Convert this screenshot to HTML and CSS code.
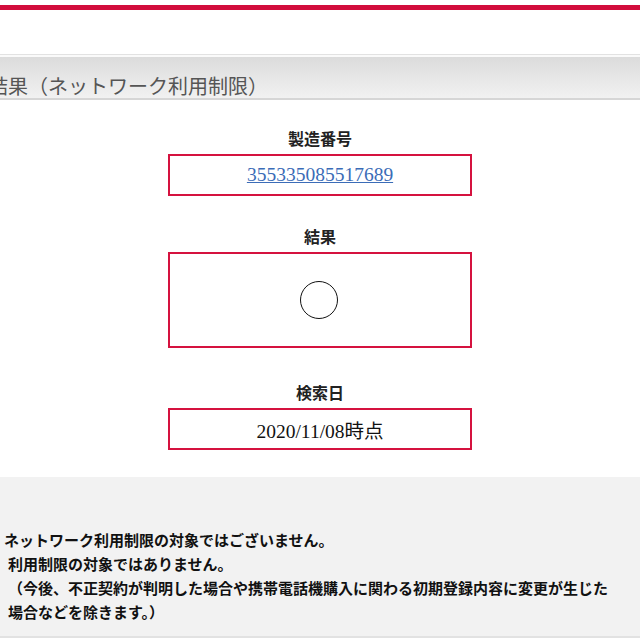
FILE: index.html
```html
<!DOCTYPE html>
<html lang="ja">
<head>
  <meta charset="UTF-8" />
  <meta name="viewport" content="width=device-width, initial-scale=1.0"/>
  <title>ネットワーク利用制限 結果</title>
  <link rel="stylesheet" href="styles.css">
</head>
<body>

  <div class="topbar"></div>

  <!-- Heading bar -->
  <h2 class="heading">結果（ネットワーク利用制限）</h2>

  <!-- Result items -->
  <div class="result">
    <div class="item">
      <div class="label">製造番号</div>
      <div class="box"><a href="#" class="imei">355335085517689</a></div>
    </div>
    <div class="item">
      <div class="label">結果</div>
      <div class="box box-tall"><span class="mark"></span></div>
    </div>
    <div class="item item-last">
      <div class="label">検索日</div>
      <div class="box">2020/11/08時点</div>
    </div>
  </div>

  <!-- Notes -->
  <div class="notes">
    <p class="lead">ネットワーク利用制限の対象ではございません。</p>
    <p>利用制限の対象ではありません。</p>
    <p>（今後、不正契約が判明した場合や携帯電話機購入に関わる初期登録内容に変更が生じた</p>
    <p>場合などを除きます。）</p>
  </div>

</body>
</html>
```

FILE: styles.css
```css
body {
  margin: 0;
  background: #fff;
  font-family: "Liberation Serif", "Noto Sans CJK JP", serif;
  color: #111;
  overflow: hidden;
}
.topbar {
  height: 5px; margin-top: 5px;
  background: #d20d3c;
}
.heading {
  margin: 44px 0 0;
  height: 43px;
  border-top: 1px solid #e2e2e2;
  border-bottom: 2px solid #d6d6d6;
  box-shadow: inset 0 2px 0 #fafafa;
  background: linear-gradient(#dadada, #e6e6e6 50%, #f1f1f1);
  font-family: "Noto Sans CJK JP", sans-serif;
  font-size: 20px; font-weight: 400;
  line-height: 62px;
  color: #555;
  text-indent: -12px;
  white-space: nowrap;
}
.result {
  width: 304px;
  margin: 28px auto 0;
  display: flex; flex-direction: column; gap: 30px;
}
.item-last { margin-top: 4px; }
.label {
  font-family: "Noto Sans CJK JP", sans-serif;
  font-size: 16px; font-weight: 700;
  line-height: 20px;
  text-align: center;
  margin-bottom: 6px;
  color: #222;
}
.box {
  height: 38px;
  border: 2px solid #d5123f;
  display: flex; align-items: center; justify-content: center;
  font-size: 19.5px;
}
.box-tall { height: 92px; }
.imei { color: #3b6cb7; }
.mark {
  width: 36px; height: 36px;
  border: 1.6px solid #111;
  border-radius: 50%;
  margin-left: -2px;
}
.notes {
  margin-top: 27px;
  padding: 51px 0 12px;
  background: #f2f2f2;
  border-bottom: 2px solid #e2e2e2;
  box-shadow: 0 2px 0 #a8a8a8;
  font-family: "Noto Sans CJK JP", sans-serif;
  font-size: 15px; font-weight: 700;
  line-height: 24px;
  color: #111;
}
.notes p { margin: 0; padding-left: 8px; white-space: nowrap; }
.notes p.lead { padding-left: 4px; }
```
